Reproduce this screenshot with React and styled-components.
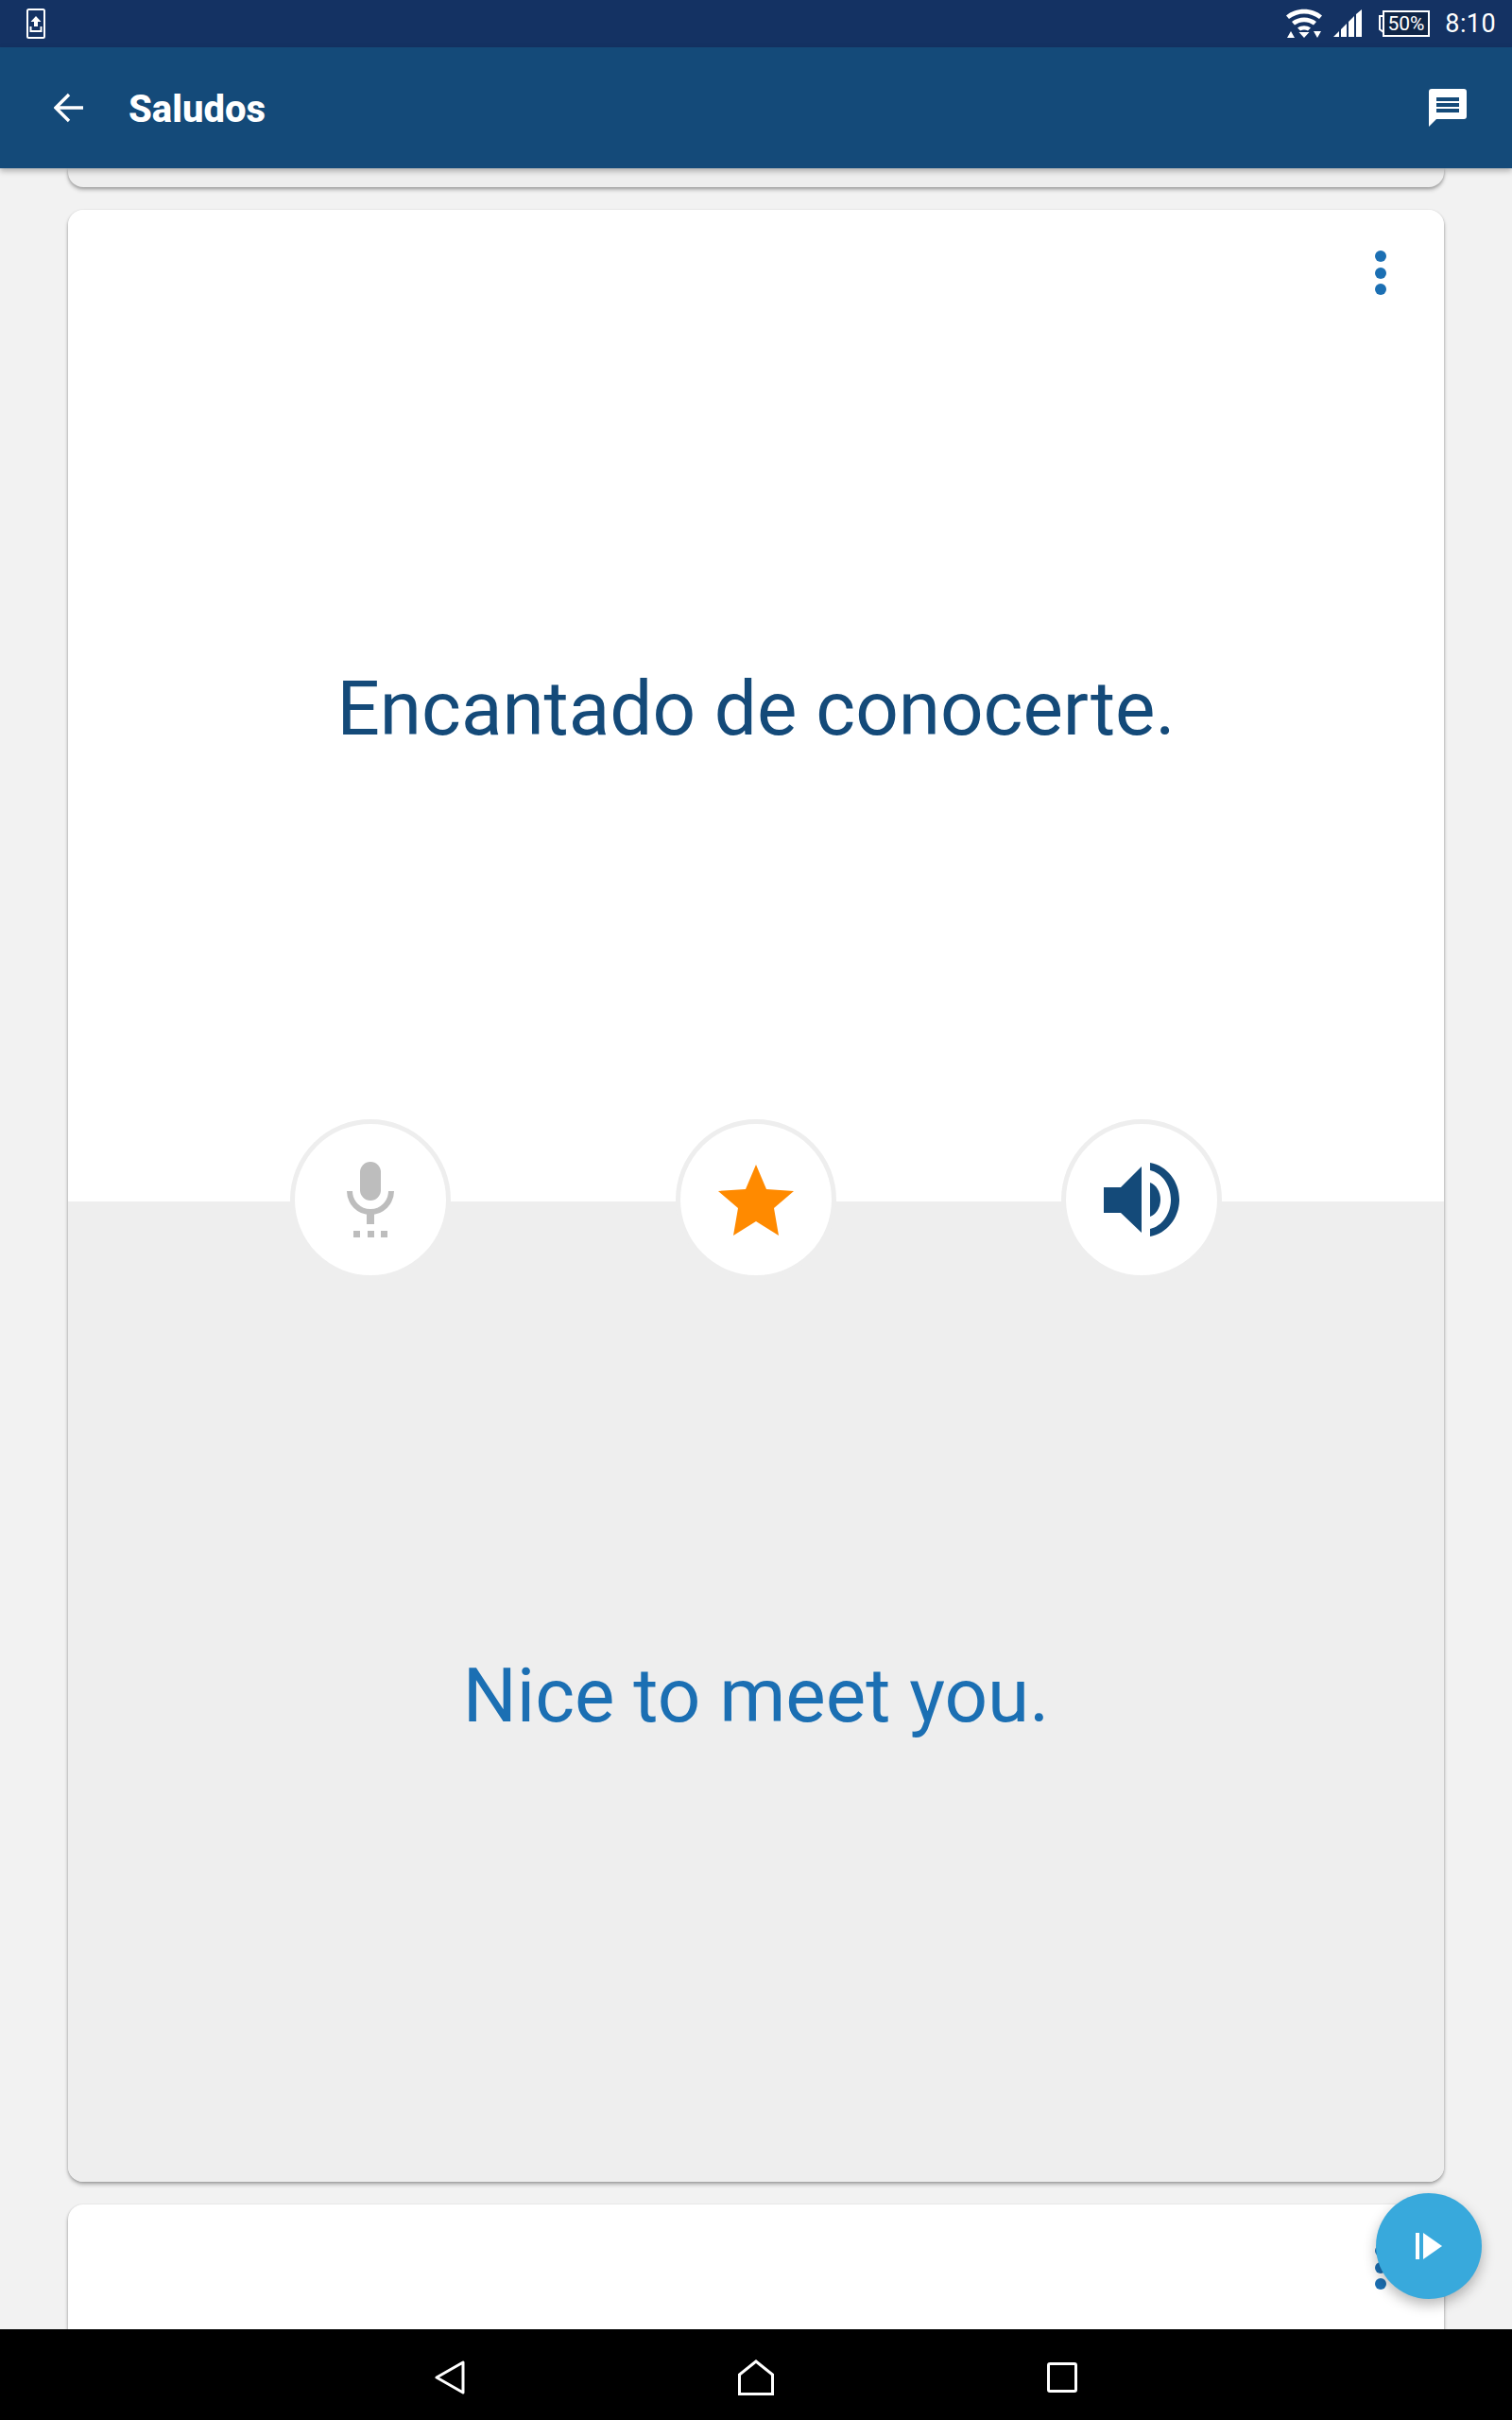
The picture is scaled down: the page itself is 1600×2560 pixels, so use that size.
import React from 'react'
import styled, { createGlobalStyle } from 'styled-components'

const GlobalStyle = createGlobalStyle`
  html, body {
    margin: 0;
    padding: 0;
    background: #f2f2f2;
    font-family: Roboto, "Liberation Sans", sans-serif;
  }
`

const Screen = styled.div`
  position: relative;
  display: flex;
  flex-direction: column;
  width: 1600px;
  height: 2560px;
  overflow: hidden;
  background: #f2f2f2;
`

const StatusBar = styled.div`
  display: flex;
  align-items: center;
  flex: 0 0 50px;
  padding: 0 17px 0 28px;
  background: #143263;
  color: #fff;
  svg { display: block; }
`

const StatusRight = styled.div`
  display: flex;
  align-items: center;
  gap: 12px;
  margin-left: auto;
`

const BatteryWrap = styled.div`
  margin-left: 5px;
`

const Clock = styled.span`
  margin-left: 4px;
  font-size: 27px;
  line-height: 50px;
  letter-spacing: 0.4px;
`

const AppBar = styled.header`
  position: relative;
  z-index: 2;
  display: flex;
  align-items: center;
  flex: 0 0 128px;
  padding: 0 48px 0 57px;
  background: #144a79;
  box-shadow: 0 3px 6px rgba(0, 0, 0, 0.28);
  color: #fff;
`

const Title = styled.h1`
  margin: 3px 0 0 47px;
  font-size: 40px;
  font-weight: 800;
  line-height: 48px;
`

const ChatButton = styled.div`
  display: flex;
  margin-left: auto;
`

const Feed = styled.main`
  display: flex;
  flex: 1;
  flex-direction: column;
  gap: 24px;
  min-height: 0;
  padding: 0 72px;
  overflow: hidden;
`

const CardBase = styled.section`
  position: relative;
  flex: none;
  display: flex;
  flex-direction: column;
  border-radius: 16px;
  box-shadow: 0 3px 4px rgba(0, 0, 0, 0.24), 0 1px 3px rgba(0, 0, 0, 0.2);
`

const PreviousCard = styled(CardBase)`
  height: 20px;
  background: #eeeeee;
  border-radius: 0 0 16px 16px;
`

const PhraseCard = styled(CardBase)`
  height: 2086px;
`

const NextCard = styled(CardBase)`
  height: 160px;
  background: #fff;
`

const Half = styled.div`
  display: flex;
  align-items: center;
  justify-content: center;
  box-sizing: border-box;
`

const SourceHalf = styled(Half)`
  flex: 0 0 1049px;
  padding-top: 7px;
  background: #fff;
  border-radius: 16px 16px 0 0;
`

const TargetHalf = styled(Half)`
  flex: 1;
  padding-top: 8px;
  background: #eeeeee;
  border-radius: 0 0 16px 16px;
`

const Phrase = styled.p`
  margin: 0;
  font-size: 80px;
  font-weight: 400;
  line-height: 90px;
  color: ${p => p.$color};
`

const Dots = styled.div`
  position: absolute;
  top: 43px;
  right: 61px;
  display: flex;
  flex-direction: column;
  gap: 5.5px;
`

const Dot = styled.span`
  width: 12px;
  height: 12px;
  border-radius: 50%;
  background: #1b6fb3;
`

const Controls = styled.div`
  position: absolute;
  top: 962px;
  left: 235px;
  display: flex;
  gap: 238px;
`

const RoundButton = styled.button`
  display: flex;
  align-items: center;
  justify-content: center;
  box-sizing: border-box;
  width: 170px;
  height: 170px;
  padding: 0;
  border: 5px solid #eeeeee;
  border-radius: 50%;
  background: #fff;
`

const Fab = styled.button`
  position: absolute;
  left: 1456px;
  top: 2320px;
  z-index: 3;
  display: flex;
  align-items: center;
  justify-content: center;
  width: 112px;
  height: 112px;
  padding: 0;
  border: 0;
  border-radius: 50%;
  background: #38a9dc;
  box-shadow: 0 6px 14px rgba(0, 0, 0, 0.28);
`

const NavBar = styled.nav`
  position: relative;
  z-index: 4;
  display: flex;
  align-items: center;
  justify-content: center;
  box-sizing: border-box;
  flex: 0 0 96px;
  padding-top: 6px;
  background: #000;
`

const NavSlot = styled.div`
  display: flex;
  justify-content: center;
  width: 324px;
`

const PushIcon = () => (
  <svg width="20" height="32" viewBox="0 0 20 32">
    <rect x="1" y="1" width="18" height="30" rx="1.5" fill="none" stroke="#fff" strokeWidth="2" />
    <path d="M10 8l5.5 6H12v5H8v-5H4.500z" fill="#fff" />
    <path d="M4.500 19v5h11v-5" fill="none" stroke="#fff" strokeWidth="2" />
  </svg>
)

const WifiIcon = () => (
  <svg width="38" height="32" viewBox="0 0 38 32">
    <path d="M0 7.500C10-1.500 28-1.500 38 7.500l-3 3.500C26 3.500 12 3.500 3 11z" fill="#fff" />
    <path d="M6 14c7.500-6 18.500-6 26 0l-3 3.500c-6-4.500-14-4.500-20 0z" fill="#fff" />
    <path d="M12 20.500c4.500-3 9.500-3 14 0l-3 3c-2.500-1.500-5.500-1.500-8 0z" fill="#fff" />
    <path d="M13.500 25h11L19 31zM1 31l4-7 4 7zM29 24h8l-4 7z" fill="#fff" />
  </svg>
)

const SignalIcon = () => (
  <svg width="30" height="30" viewBox="0 0 30 30">
    <path d="M0 29l6-6v6zM8 29V21l6-6v14zM16 29V13l6-6v22zM24 29V5l6-5v29z" fill="#fff" />
  </svg>
)

const BatteryIcon = () => (
  <svg width="55" height="28" viewBox="0 0 55 28">
    <rect x="6" y="1" width="48" height="26" fill="#0f2547" stroke="#fff" strokeWidth="2" />
    <path d="M6 6H2v14l4 3" fill="none" stroke="#fff" strokeWidth="2" />
    <text x="30" y="21" textAnchor="middle" fontSize="21" fontFamily="Roboto, sans-serif" fill="#fff">50%</text>
  </svg>
)

const BackIcon = () => (
  <svg width="32" height="32" viewBox="0 0 32 32">
    <path d="M31 16H3M16 2L2 16l14 14" fill="none" stroke="#fff" strokeWidth="3.400" />
  </svg>
)

const ChatIcon = () => (
  <svg width="40" height="40" viewBox="0 0 40 40">
    <path d="M3 0h34a3 3 0 0 1 3 3v26a3 3 0 0 1-3 3H8l-8 8V3a3 3 0 0 1 3-3z" fill="#fff" />
    <path d="M8 9h24v4H8zM8 15h24v4H8zM8 21h24v4H8z" fill="#144a79" />
  </svg>
)

const MicIcon = () => (
  <svg width="50" height="80" viewBox="0 0 50 80" fill="#bdbdbd">
    <rect x="14" y="0" width="22" height="41" rx="11" />
    <path d="M3 31a22 22 0 0 0 44 0" fill="none" stroke="#bdbdbd" strokeWidth="6" />
    <rect x="21" y="50" width="8" height="16" />
    <rect x="7" y="73" width="7" height="7" />
    <rect x="22" y="73" width="7" height="7" />
    <rect x="36" y="73" width="7" height="7" />
  </svg>
)

const StarIcon = () => (
  <svg width="80" height="75" viewBox="0 0 80 75">
    <path d="M40 0l11 26 29 2-21 18 5 29-24-15-24 15 5-29L0 28l29-2z" fill="#ff8a00" />
  </svg>
)

const SpeakerIcon = () => (
  <svg width="80" height="78" viewBox="0 0 80 78" fill="#144a79">
    <path d="M0 26h18L40 4v70L18 53H0z" />
    <path d="M49 21c6 2 11 9 11 18s-5 16-11 18z" />
    <path d="M49 0c18 3 31 20 31 39S67 75 49 78v-8c13-3 22-16 22-31S62 11 49 8z" />
  </svg>
)

const PlayIcon = () => (
  <svg width="28" height="28" viewBox="0 0 28 28" fill="#fff">
    <rect x="0" y="0" width="4" height="28" />
    <path d="M8 0l20 14L8 28z" />
  </svg>
)

const NavBack = () => (
  <svg width="32" height="36" viewBox="0 0 32 36">
    <path d="M30 2v32L2 18z" fill="none" stroke="#fff" strokeWidth="3" strokeLinejoin="round" />
  </svg>
)

const NavHome = () => (
  <svg width="38" height="38" viewBox="0 0 38 38">
    <path d="M1.500 36.500V16L19 2l17.500 14v20.500z" fill="none" stroke="#fff" strokeWidth="3" />
  </svg>
)

const NavRecent = () => (
  <svg width="32" height="32" viewBox="0 0 32 32">
    <rect x="1.500" y="1.500" width="29" height="29" rx="1.500" fill="none" stroke="#fff" strokeWidth="3" />
  </svg>
)

const Kebab = () => (
  <Dots>
    <Dot />
    <Dot />
    <Dot />
  </Dots>
)

export default function App() {
  return (
    <Screen>
      <GlobalStyle />
      <StatusBar>
        <PushIcon />
        <StatusRight>
          <WifiIcon />
          <SignalIcon />
          <BatteryWrap><BatteryIcon /></BatteryWrap>
          <Clock>8:10</Clock>
        </StatusRight>
      </StatusBar>
      <AppBar>
        <BackIcon />
        <Title>Saludos</Title>
        <ChatButton>
          <ChatIcon />
        </ChatButton>
      </AppBar>
      <Feed>
        <PreviousCard />
        <PhraseCard>
          <SourceHalf>
            <Phrase $color="#144a79">Encantado de conocerte.</Phrase>
          </SourceHalf>
          <TargetHalf>
            <Phrase $color="#1b6fb3">Nice to meet you.</Phrase>
          </TargetHalf>
          <Kebab />
          <Controls>
            <RoundButton><MicIcon /></RoundButton>
            <RoundButton><StarIcon /></RoundButton>
            <RoundButton><SpeakerIcon /></RoundButton>
          </Controls>
        </PhraseCard>
        <NextCard>
          <Kebab />
        </NextCard>
      </Feed>
      <Fab><PlayIcon /></Fab>
      <NavBar>
        <NavSlot><NavBack /></NavSlot>
        <NavSlot><NavHome /></NavSlot>
        <NavSlot><NavRecent /></NavSlot>
      </NavBar>
    </Screen>
  )
}
